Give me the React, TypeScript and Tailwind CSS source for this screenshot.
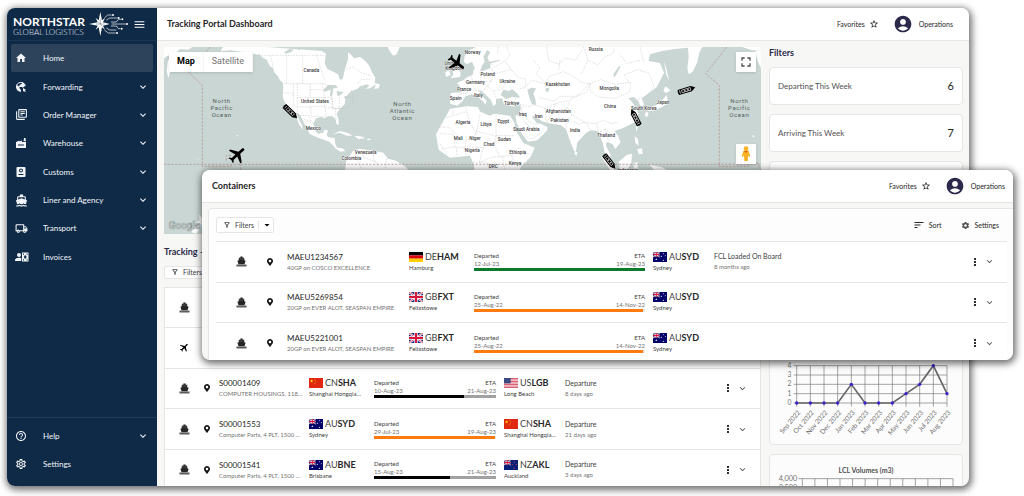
import { useState, type ReactNode } from "react";
import clsx from "clsx";
import {
  MdAccountCircle,
  MdArrowDropDown,
  MdDirectionsBoat,
  MdExpandMore,
  MdFactory,
  MdFlight,
  MdFullscreen,
  MdHelpOutline,
  MdHome,
  MdMenu,
  MdMoreVert,
  MdOutlineFilterAlt,
  MdOutlineLibraryBooks,
  MdOutlineLocalShipping,
  MdOutlineSettings,
  MdSettings,
  MdSort,
  MdStarOutline,
} from "react-icons/md";
import { FaMapMarkerAlt } from "react-icons/fa";

type Country = "DE" | "GB" | "AU" | "CN" | "US" | "NZ";

type Port = { country: Country; code: string; city: string };

type Shipment = {
  id: string;
  detail: string;
  from: Port;
  to: Port;
  departed: string;
  eta: string;
  progress: number;
  tone: "green" | "orange" | "black";
  status?: string;
  ago?: string;
};

const sydney: Port = { country: "AU", code: "SYD", city: "Sydney" };
const felixstowe: Port = { country: "GB", code: "FXT", city: "Felixstowe" };
const shanghai: Port = { country: "CN", code: "SHA", city: "Shanghai Hongqiao Int" };

const containers: Shipment[] = [
  {
    id: "MAEU1234567",
    detail: "40GP on COSCO EXCELLENCE",
    from: { country: "DE", code: "HAM", city: "Hamburg" },
    to: sydney,
    departed: "12-Jul-23",
    eta: "19-Aug-23",
    progress: 100,
    tone: "green",
    status: "FCL Loaded On Board",
    ago: "8 months ago",
  },
  {
    id: "MAEU5269854",
    detail: "20GP on EVER ALOT, SEASPAN EMPIRE",
    from: felixstowe,
    to: sydney,
    departed: "25-Aug-22",
    eta: "14-Nov-22",
    progress: 99,
    tone: "orange",
  },
  {
    id: "MAEU5221001",
    detail: "20GP on EVER ALOT, SEASPAN EMPIRE",
    from: felixstowe,
    to: sydney,
    departed: "25-Aug-22",
    eta: "14-Nov-22",
    progress: 99,
    tone: "orange",
  },
];

const shipments: Shipment[] = [
  {
    id: "S00001409",
    detail: "COMPUTER HOUSINGS, 118 PLT",
    from: shanghai,
    to: { country: "US", code: "LGB", city: "Long Beach" },
    departed: "10-Aug-23",
    eta: "21-Aug-23",
    progress: 74,
    tone: "black",
    status: "Departure",
    ago: "8 days ago",
  },
  {
    id: "S00001553",
    detail: "Computer Parts, 4 PLT, 1500 KGS",
    from: sydney,
    to: shanghai,
    departed: "29-Jul-23",
    eta: "19-Aug-23",
    progress: 99,
    tone: "orange",
    status: "Departure",
    ago: "21 days ago",
  },
  {
    id: "S00001541",
    detail: "Computer Parts, 4 PLT, 1500 KGS",
    from: { country: "AU", code: "BNE", city: "Brisbane" },
    to: { country: "NZ", code: "AKL", city: "Auckland" },
    departed: "15-Aug-23",
    eta: "21-Aug-23",
    progress: 62,
    tone: "black",
    status: "Departure",
    ago: "3 days ago",
  },
];

const toneClass = {
  green: "bg-[#0b7a2b]",
  orange: "bg-[#ff7a0f]",
  black: "bg-black",
};

/* ---------- icons ---------- */

function ForwardingIcon() {
  return (
    <svg viewBox="0 0 24 24" className="size-3" fill="none" stroke="currentColor" strokeWidth="2">
      <path d="M20.6 10A9 9 0 1 0 11 20.9" />
      <path
        d="M4 8l5.500 5.500v2l2.500 2.500v3C6 21 2 16 4 8zM14 3v2l-2.500 2H9.500v2.500h-2V12H14l1.500 1.500L20 10c0-3-2-6-6-7z"
        fill="currentColor"
        stroke="none"
      />
      <path d="M16 14l6.500 4-2.800.7 1.800 3-1.600 1-1.800-3-2.100 2z" fill="currentColor" stroke="none" />
    </svg>
  );
}

function CustomsIcon() {
  return (
    <svg viewBox="0 0 24 24" className="size-3" fill="currentColor">
      <path
        fillRule="evenodd"
        d="M5 2h14a2 2 0 0 1 2 2v16a2 2 0 0 1-2 2H5a2 2 0 0 1-2-2V4c0-1.100.9-2 2-2zm7 3a4 4 0 1 0 0 8 4 4 0 0 0 0-8zM7 16v2h10v-2z"
      />
      <circle cx="12" cy="9" r="2" />
    </svg>
  );
}

function InvoicesIcon() {
  return (
    <svg viewBox="0 0 28 24" className="h-3 w-[14px]" fill="currentColor">
      <circle cx="8" cy="8" r="4" />
      <path d="M0 20v-2c0-3 4-4.500 8-4.500 1.500 0 3 .2 4.500.6V20z" />
      <path
        fillRule="evenodd"
        d="M14 3h13v18H14zM16 5v3c1 0 2-1 2-3zm7 0c0 2 1 3 2 3V5zm-2.500 3.500a2.500 3.500 0 1 0 0 7 2.500 3.500 0 0 0 0-7zM16 16v3h2c0-2-1-3-2-3zm9 0c-1 0-2 1-2 3h2z"
      />
    </svg>
  );
}

function ShipIcon() {
  return (
    <svg viewBox="0 0 24 24" className="size-[11px] text-neutral-800" fill="currentColor">
      <path d="M9.500 1h5v3H18v5.500l3 1-2.500 7.500h-13L3 10.500l3-1V4h3.500z" />
      <path d="M1 18.500h22V23H1z" opacity=".75" />
      <path d="M7.500 6h9v1h-9z" fill="#fff" opacity=".4" />
    </svg>
  );
}

const starPoints = "M0-3.300 1-1 3.400-.9 1.500.6 2.100 3 0 1.600-2.100 3-1.500.6-3.400-.9-1-1z";

function Flag({ country }: { country: Country }) {
  const union = (w: number, h: number) => (
    <g>
      <rect width={w} height={h} fill="#1b2a78" />
      <path d={`M0 0 ${w} ${h}M${w} 0 0 ${h}`} stroke="#fff" strokeWidth={h / 5} />
      <path d={`M0 0 ${w} ${h}M${w} 0 0 ${h}`} stroke="#d8153a" strokeWidth={h / 14} />
      <path d={`M${w / 2} 0V${h}M0 ${h / 2}H${w}`} stroke="#fff" strokeWidth={h / 3} />
      <path d={`M${w / 2} 0V${h}M0 ${h / 2}H${w}`} stroke="#d8153a" strokeWidth={h / 5} />
    </g>
  );
  const star = (x: number, y: number, s: number, fill: string) => (
    <path d={starPoints} transform={`translate(${x} ${y}) scale(${s})`} fill={fill} />
  );

  return (
    <svg viewBox="0 0 42 30" className="h-[10px] w-[14px] shrink-0 overflow-hidden">
      {country === "DE" && (
        <>
          <rect width="42" height="10" fill="#000" />
          <rect y="10" width="42" height="10" fill="#dd0000" />
          <rect y="20" width="42" height="10" fill="#ffce00" />
        </>
      )}
      {country === "GB" && union(42, 30)}
      {country === "AU" && (
        <>
          <rect width="42" height="30" fill="#00006b" />
          {union(20, 15)}
          {star(10, 22, 1, "#fff")}
          {star(31, 5, 0.7, "#fff")}
          {star(25, 13, 0.7, "#fff")}
          {star(37, 11, 0.7, "#fff")}
          {star(31, 25, 0.7, "#fff")}
        </>
      )}
      {country === "NZ" && (
        <>
          <rect width="42" height="30" fill="#062078" />
          {union(20, 15)}
          {star(31, 6, 0.8, "#e0334d")}
          {star(25, 14, 0.8, "#e0334d")}
          {star(37, 13, 0.8, "#e0334d")}
          {star(31, 24, 0.8, "#e0334d")}
        </>
      )}
      {country === "CN" && (
        <>
          <rect width="42" height="30" fill="#e02810" />
          {star(8, 9, 1.5, "#ffde00")}
          {star(16, 4, 0.5, "#ffde00")}
          {star(19, 8, 0.5, "#ffde00")}
          {star(19, 13, 0.5, "#ffde00")}
          {star(16, 17, 0.5, "#ffde00")}
        </>
      )}
      {country === "US" && (
        <>
          <rect width="42" height="30" fill="#fff" />
          {[0, 1, 2, 3, 4, 5, 6].map((i) => (
            <rect key={i} y={i * 4.6} width="42" height="2.300" fill="#d03048" />
          ))}
          <rect width="20" height="16" fill="#3c4a80" />
        </>
      )}
    </svg>
  );
}

function NorthstarMark() {
  return (
    <svg viewBox="0 0 120 72" className="h-6 w-10" fill="none" stroke="#fff" strokeWidth="2">
      <path
        d="M34 0l5 25 9-7-6 13 20 5-20 5 6 12-9-7-5 26-5-26-9 7 6-12-26-5 26-5-6-13 9 7z"
        fill="#fff"
        stroke="none"
      />
      <path d="M34 22v14H48M34 36l-6-6M34 36l6 7M34 36H20" stroke="#0f2a47" strokeWidth="1" />
      <path d="M46 18l10-9h12M52 24l10-6h24M66 30h16l6-8h8M68 36h44M66 42h16l6 8h6M52 48l10 6h20M46 54l12 9h22" />
      <g fill="#fff" stroke="none">
        <circle cx="72" cy="9" r="3" />
        <circle cx="89" cy="18" r="3" />
        <circle cx="100" cy="22" r="3" />
        <circle cx="114" cy="36" r="3" />
        <circle cx="98" cy="50" r="3" />
        <circle cx="84" cy="63" r="3" />
      </g>
    </svg>
  );
}

/* ---------- sidebar ---------- */

const navItems: { label: string; icon: ReactNode; expandable?: boolean }[] = [
  { label: "Home", icon: <MdHome size={12} /> },
  { label: "Forwarding", icon: <ForwardingIcon />, expandable: true },
  { label: "Order Manager", icon: <MdOutlineLibraryBooks size={13} />, expandable: true },
  { label: "Warehouse", icon: <MdFactory size={12} />, expandable: true },
  { label: "Customs", icon: <CustomsIcon />, expandable: true },
  { label: "Liner and Agency", icon: <MdDirectionsBoat size={13} />, expandable: true },
  { label: "Transport", icon: <MdOutlineLocalShipping size={13} />, expandable: true },
  { label: "Invoices", icon: <InvoicesIcon /> },
];

function NavItem({
  label,
  icon,
  expandable,
  active,
}: {
  label: string;
  icon: ReactNode;
  expandable?: boolean;
  active?: boolean;
}) {
  return (
    <a
      href="#"
      className={clsx(
        "flex min-h-7 flex-1 items-center rounded-xs px-1 text-[8px] text-slate-100",
        active ? "bg-[#2d435c]" : "hover:bg-white/5",
      )}
    >
      <span className="flex w-7 items-center">{icon}</span>
      <span className="flex-1">{label}</span>
      {expandable ? <MdExpandMore size={12} /> : null}
    </a>
  );
}

function Sidebar() {
  return (
    <aside className="flex w-[150px] shrink-0 flex-col bg-[#0f2a47] text-white">
      <div className="flex h-[33px] shrink-0 items-center border-b border-[#1b3553] pl-[6px]">
        <div className="w-[76px] pt-1 whitespace-nowrap">
          <div className="text-[12px] leading-[12px] font-bold">NORTHSTAR</div>
          <div className="text-[8px] leading-[8px] font-light text-slate-200">GLOBAL LOGISTICS</div>
        </div>
        <NorthstarMark />
        <button type="button" aria-label="Toggle menu" className="ml-1">
          <MdMenu size={13} />
        </button>
      </div>
      <nav className="mx-1 mt-[3px] flex h-[227px] flex-col">
        {navItems.map((item) => (
          <NavItem key={item.label} {...item} active={item.label === "Home"} />
        ))}
      </nav>
      <nav className="mt-auto flex flex-col border-t border-[#243d5a] px-1 pt-1 pb-2">
        <NavItem label="Help" icon={<MdHelpOutline size={12} />} expandable />
        <NavItem label="Settings" icon={<MdOutlineSettings size={12} />} />
      </nav>
    </aside>
  );
}

/* ---------- shared pieces ---------- */

function TitleBar({ title, className }: { title: string; className?: string }) {
  return (
    <header
      className={clsx(
        "flex h-[33px] shrink-0 items-center border-b border-neutral-200 bg-white pl-[10px] text-[7px] text-neutral-800",
        className,
      )}
    >
      <h1 className="flex-1 text-[9px] font-bold">{title}</h1>
      <button type="button" className="mr-[14px] flex items-center gap-1">
        Favorites
        <MdStarOutline size={10} />
      </button>
      <button type="button" className="flex items-center gap-[6px]">
        <MdAccountCircle size={20} className="text-[#2b2a4a]" />
        Operations
      </button>
    </header>
  );
}

function FilterButton() {
  return (
    <button
      type="button"
      className="flex h-4 w-[58px] items-center rounded-xs border border-neutral-200 bg-white pl-[6px] text-[7px] text-neutral-700"
    >
      <MdOutlineFilterAlt size={8} />
      <span className="mx-1">Filters</span>
      <span className="flex h-2 items-center border-l border-neutral-200 pl-[2px]">
        <MdArrowDropDown size={12} className="text-black" />
      </span>
    </button>
  );
}

function PortCell({ port }: { port: Port }) {
  return (
    <div className="min-w-0">
      <div className="flex items-center gap-[2px] text-[9px] leading-[12px] text-neutral-700">
        <Flag country={port.country} />
        <span>
          {port.country}
          <b className="font-bold text-neutral-800">{port.code}</b>
        </span>
      </div>
      <div className="w-[54px] truncate text-[6px] leading-[10px] text-neutral-700">{port.city}</div>
    </div>
  );
}

function ShipmentRow({ item, columns }: { item: Shipment; columns: string }) {
  return (
    <li className={clsx("grid min-h-0 items-center border-t border-neutral-200 bg-white pr-3", columns)}>
      <span className="flex justify-center">
        <ShipIcon />
      </span>
      <FaMapMarkerAlt size={8} className="text-neutral-900" />
      <div className="min-w-0 pr-[6px]">
        <div className="text-[8px] leading-[12px] text-neutral-800">{item.id}</div>
        <div className="truncate text-[6px] leading-[10px] text-neutral-500">{item.detail}</div>
      </div>
      <PortCell port={item.from} />
      <div className="mr-2 text-[6px] leading-[8px] text-neutral-500">
        <div className="flex justify-between text-neutral-700">
          <span>Departed</span>
          <span>ETA</span>
        </div>
        <div className="flex justify-between">
          <span>{item.departed}</span>
          <span>{item.eta}</span>
        </div>
        <div className={clsx("h-[3px]", item.tone === "black" ? "bg-neutral-400" : "bg-neutral-200")}>
          <div className={clsx("h-full", toneClass[item.tone])} style={{ width: `${item.progress}%` }} />
        </div>
      </div>
      <PortCell port={item.to} />
      <div className="text-neutral-700">
        <div className="text-[7px] leading-[11px]">{item.status}</div>
        <div className="text-[6px] leading-[10px] text-neutral-500">{item.ago}</div>
      </div>
      <div className="flex items-center justify-end gap-[3px]">
        <button type="button" aria-label={`Actions for ${item.id}`}>
          <MdMoreVert size={12} className="text-black" />
        </button>
        <button type="button" aria-label={`Expand ${item.id}`}>
          <MdExpandMore size={11} className="text-neutral-600" />
        </button>
      </div>
    </li>
  );
}

/* ---------- map ---------- */

const americasLabels: [number, number, string][] = [
  [454, 214, "Canada"],
  [465, 309, "United States"],
  [460, 390, "Mexico"],
  [617, 460, "Venezuela"],
  [574, 480, "Colombia"],
];

const easternLabels: [number, number, string][] = [
  [98, 162, "Norway"],
  [34, 195, "United"],
  [44, 210, "Kingdom"],
  [143, 226, "Poland"],
  [106, 250, "Germany"],
  [202, 249, "Ukraine"],
  [73, 273, "France"],
  [115, 289, "Italy"],
  [47, 298, "Spain"],
  [467, 152, "Russia"],
  [353, 258, "Kazakhstan"],
  [508, 268, "Mongolia"],
  [215, 314, "Türkiye"],
  [510, 322, "China"],
  [611, 329, "South Korea"],
  [669, 312, "Japan"],
  [355, 339, "Afghanistan"],
  [248, 346, "Iraq"],
  [296, 352, "Iran"],
  [359, 366, "Pakistan"],
  [69, 370, "Algeria"],
  [138, 376, "Libya"],
  [190, 369, "Egypt"],
  [259, 392, "Saudi Arabia"],
  [405, 395, "India"],
  [498, 409, "Thailand"],
  [55, 418, "Mali"],
  [105, 418, "Niger"],
  [193, 422, "Sudan"],
  [147, 436, "Chad"],
  [97, 455, "Nigeria"],
  [233, 460, "Ethiopia"],
  [160, 502, "DRC"],
  [225, 494, "Kenya"],
  [563, 514, "Indonesia"],
];

const planePath =
  "M21 16v-2l-8-5V3.500c0-.83-.67-1.500-1.500-1.500S10 2.670 10 3.500V9l-8 5v2l8-2.500V19l-2 1.500V22l3.500-1 3.500 1v-1.500L13 19v-5.500l8 2.500z";

function PlaneMarker({ x, y, angle }: { x: number; y: number; angle: number }) {
  return (
    <path
      d={planePath}
      transform={`translate(${x} ${y}) rotate(${angle}) scale(2.700) translate(-11.500 -12)`}
      fill="#000"
    />
  );
}

function VesselMarker({ x, y, angle }: { x: number; y: number; angle: number }) {
  return (
    <g transform={`translate(${x} ${y}) rotate(${angle})`}>
      <path d="M-26-8h40l13 8-13 8h-40q-3-8 0-16z" fill="#000" />
      <path d="M-21-5v10" stroke="#fff" strokeWidth="2" />
      <g fill="none" stroke="#e5e5e5" strokeWidth="2">
        <path d="M-15-4h8v8h-8zM-5-4h8v8h-8zM5-4h7v8H5z" />
      </g>
    </g>
  );
}

function OceanLabel({ x, y, lines }: { x: number; y: number; lines: string[] }) {
  return (
    <text textAnchor="middle" className="fill-[#55605f] text-[18px] tracking-widest">
      {lines.map((line, i) => (
        <tspan key={line} x={x} y={y + i * 20}>
          {line}
        </tspan>
      ))}
    </text>
  );
}

function WorldMap() {
  const [view, setView] = useState("Map");

  return (
    <section
      aria-label="Shipment map"
      className="relative h-[187px] shrink-0 overflow-hidden bg-[#c9d6d3] font-['Roboto',sans-serif]"
    >
      <svg viewBox="0 0 1791 561" preserveAspectRatio="xMidYMid slice" className="size-full">
        {/* Americas */}
        <g transform="translate(-12 -140)">
          <g fill="#fff">
            <path d="M12 138H100L85 148 60 146 45 160 20 168 12 175zM24 178l12 2-2 22-9 32-5-22z" />
            <path d="M190 138h108l-2 26-14-4-30-4-40-6-30 2z" />
            <path d="M294 138l2 22 14 14 10 4 10 20 8 4 4 14 12 12 6 12 8 8 2 14-2 24 4 16 8 12 12 10 10 12 8 18 8 20 10 14-2-14-10-18-6-20 10 8 10 20 14 22 4 14 26 12 18 6 16 6 12 12 8 10 14 8 14-2-8-8-16-2-6-10-2-18-20-4-4-6 4-14-10-2-6 10-14 2-10-10-4-20 8-16 16-4 10 4 10-6 14 0 8 8 4 16 6 2 0-16-6-18 8-12 16-16 2-16-4-6 8-4 14-14 18-6 8-8 22-6 6 4-12 10 14-2 18-12-6 14 14-2 4-12-16-4 2-16-10-16-8-20-14-16-14-10-18 4-10-12-8-6 0 20-4 14-6 20-6 26-8 2-6-16-14-8-18-8-8-18 4-28-12-8z" />
            <path d="M682 138l8 16 10 12 10-4 10-24zM520 400l20-8 24 6 14 8-18 0-20-8zM582 406l20 2 14 5-20 4zM622 415l10 0v4h-10z" />
            <path d="M548 545l8-40 2-20 20-32 18-8 44 6 30 6 14 18 24 6 30 20 14 16-2 34zM230 403l5 3-4 3z" />
            <path d="M490 268l14-14 22 0 8 8-14 2-4 26-6-4 2-18-18 6zM530 272l22 4-14 10-6 0z" fill="#c9d6d3" />
            <path d="M372 156l16-10 14 2-10 8-14 4zM398 138h30l-10 12z" fill="#c9d6d3" />
          </g>
          <g fill="none" stroke="#c4c4c4" strokeWidth="1.500" strokeDasharray="5 3">
            <path d="M296 165h200M332 165l12 60M380 165v85M428 165v85M470 165l12 40 14 38M366 250h126l26 14M366 278h34v40l-16 14M400 250v38M412 250v42h38M412 292v60M450 250v42M450 268h36M450 292h44M486 250l8 42v30M450 318h46M412 345h34l8 18M412 320h40l2 28h40M496 322l4 38M494 292h22l4 30h-22M516 292v32h22M538 290v36l36-6M518 324h38M526 324l2 36M540 324l8 34M552 290h26v18M574 270l6 20M424 354l24 8 20 10 14 20M560 206l20-6 20 16 34 10M590 250l14-12 26-2" />
            <path d="M560 470l34 10 10 26M604 450l8 22 40 14M640 456v22l16 20M680 474l-4 32" />
          </g>
        </g>

        {/* Europe, Africa and Asia */}
        <g transform="translate(828 -140)">
          <g fill="#fff">
            <path d="M112 138l-24 12-14 16-2 18 8 8 16-8 6 14 8 18 10-2 6-18 8-12-4-14 12-22 8 8-8 16 6 12 24-4 14-2-22 8-12 2-2 16-22 8-16 2-4-16-8 14-2 12-16 6-12 10-20 8 12 12 4 16-34 2-2 32 22 6 16-14 8-14 20-6 14 4 20 18 6 10 4-12-16-18-8-14 12 4 24 24 8 20 8-8 0-14 18-2 6 18 24 6 26-4-2 26-14 6 4 22 16 34 18 22 28-4 30-30 0-10-20-10-12-2-14-18 6-4 26 18 34 8 20 2 16 12 10 30 14 36 6 0 4-26 26-28 16-8 18 2 10 20 6 14 6 30 16 16 2-8-14-28 2-12 18 8 8 14 16-20-8-20-10-14 24-8 36-18 12-26-12-24-12-16-8-6 18-4 14 14 6 16 10-6-6-20 18-14 26-20 14-26 8-16-12-30-34-6 4-20 36-10 38-6 40-4 2 30-4 32 4 18 12-8 14-28 6-30 8-14 22-12z" />
            <path d="M32 186l14-6 4 18 12 20-2 12-28 4 8-12zM16 216l12-6 4 14-14 6z" />
            <path d="M30 325l50-7 34 2 6 14 30 12 12-6 48 6 12 18 8 30 20 34 34 14-12 28-30 30-8 40H106l-4-46-12-28-60 6-34-24-8-46 22-40z" />
            <path d="M672 182l8 26 8 34-10-20zM676 258l16 12-14 8-8-6zM680 284l4 24-18 12-20 10-22 2 4-10 22-8 18-16zM618 334l8 4-4 12-8-4zM588 376l6 4-6 14zM584 408l10 8 2 20-10-8zM592 446l14-2 2 16-12 2zM404 452l8 4-2 10-6-4zM536 484l24-20 16-4-2 28-14 24h-20zM482 466l28 20 24 36-12 4zM580 488l14-2-2 24-10 2zM630 494l34 6 44 24h-54zM946 150h20v60l-14-30zM900 138h66v10l-30 2z" />
            <path d="M936 404l8 4-4 4z" />
          </g>
          <g fill="#c9d6d3">
            <path d="M182 284l8-16 18 4 8-6 18 16 6 10-24-2-18 6zM262 268l12-6 14 2-8 16 6 16 2 18-12-2-8-20zM318 262l10 2-4 12-8-4zM520 222l18-26 4 2-14 26-6 8zM238 345l40 44-8-6z" />
          </g>
          <g fill="none" stroke="#c4c4c4" strokeWidth="1.500" strokeDasharray="5 3">
            <path d="M70 236l12 22 0 20-24 4M92 228l10 20 24-4 16 14-12 12-30 0M120 214l4 30M150 200l12 20-8 22-30 2M162 220l50-12 24 24 22 4-4 26-20 4M154 242l-12 16 18 14 28-6 6-18M160 272l10 22M150 186l14 14 30-18M200 140l10 24-16 18 20 26M176 140l-4 22" />
            <path d="M256 260l20-20 40 10 12-22 42-14 24 10 30 22 24 4-24 26-16 12-46 0-20 14-44-10M280 180l20 20-12 20 24 22M320 140l6 40 30 12 20-18 30 6 20-30M360 180l-4 30M430 140l14 40 30 14 20-24 24-10 6-22M444 180l-20 40M448 250l34-12 40 14 50-6-4 30-42 18-50-4-24-16z" />
            <path d="M452 252l-14 24-46 20-10 26 14 22 38 22 30 4 26-10 24 10 20-4M568 248l-16-24 40-16 34 10 16 40-24 30-28 10M540 160l20 30 40-10M600 140l10 44M240 312l26 6 20-4 30 10 30-14 40-10M316 324l2 44M346 310l-10 32-16 26M382 322l-26 20-8 32M240 320l26 44 30 10M236 350l-6-20 22-10M246 404l30 12 30-20M396 344l-20 30 6 12M434 366l-20 6-18-10M440 368l12 24M470 370l6 26 20-10 18 16M496 386l10 40M476 396l-4 10" />
            <path d="M18 352l60-18M40 320l-2 26M78 320l6 30 24 52-34 22-50-44-24 0M108 402l12-60M108 392l60 16V346M168 406h56M168 408l-4 24 14 36 40-2 20-24M0 400l40 2 4 38-40 6M44 440l30 2 4-18M74 442l4 24M80 440l50 2 20-30M130 442l-12 44M118 486l40-16 30 0M188 470l6 40M218 466l2 20 30 14M238 442l14 20 24-2M100 486h40l10 24M0 430l20 30M50 442v24" />
          </g>
        </g>

        {/* date line and equator */}
        <g fill="none" stroke="#b99a9a" strokeWidth="2.500" strokeDasharray="7 4">
          <path d="M138 0L73 75l42 40v243h86v-6M0 352h1791M201 325h-14v20M228 350l5 40 60 171" />
          <path d="M1688 0l-63 80 41 35v243h87v-6M1778 345l13 26" />
        </g>

        <g
          textAnchor="middle"
          className="fill-neutral-700 text-[14px] font-medium"
          stroke="#fff"
          strokeWidth="2"
          paintOrder="stroke"
        >
          {americasLabels.map(([x, y, name]) => (
            <text key={name} x={x - 12} y={y - 140}>
              {name}
            </text>
          ))}
          {easternLabels.map(([x, y, name]) => (
            <text key={name} x={x + 828} y={y - 140}>
              {name}
            </text>
          ))}
        </g>
        <OceanLabel x={173} y={169} lines={["North", "Pacific", "Ocean"]} />
        <OceanLabel x={715} y={178} lines={["North", "Atlantic", "Ocean"]} />
        <OceanLabel x={1726} y={169} lines={["North", "Pacific", "Ocean"]} />

        <PlaneMarker x={220} y={323} angle={48} />
        <PlaneMarker x={878} y={47} angle={128} />
        <VesselMarker x={380} y={195} angle={44} />
        <VesselMarker x={1568} y={129} angle={-17} />
        <VesselMarker x={1414} y={211} angle={-117} />
        <VesselMarker x={1337} y={344} angle={52} />

        <path d="M84 555l14-28 10-8-2-14 12 14-8 20-14 20zM150 385l8 8M102 334l3 4" fill="#fff" stroke="#fff" strokeWidth="2" />
        <text x="14" y="546" className="fill-white text-[30px] font-medium" stroke="#8b9694" strokeWidth="2">
          Google
        </text>
      </svg>

      <div className="absolute top-[5px] left-[5px] flex h-5 bg-white text-[9px] shadow-sm">
        {["Map", "Satellite"].map((name) => (
          <button
            key={name}
            type="button"
            onClick={() => setView(name)}
            className={clsx(
              "border-r border-neutral-100 px-2",
              view === name ? "font-bold text-black" : "text-neutral-500",
            )}
          >
            {name}
          </button>
        ))}
      </div>
      <button
        type="button"
        aria-label="Full screen"
        className="absolute top-[5px] right-[5px] flex size-5 items-center justify-center bg-white shadow-sm"
      >
        <MdFullscreen size={16} className="text-neutral-600" />
      </button>
      <button
        type="button"
        aria-label="Street view"
        className="absolute top-[97px] right-[5px] flex size-5 items-center justify-center bg-white shadow-sm"
      >
        <svg viewBox="0 0 30 48" className="h-4 w-[10px]">
          <circle cx="15" cy="8" r="7" fill="#f9b021" />
          <path d="M7 15h16l5 16-4 2-3-5-1 17H10L9 28l-3 5-4-2z" fill="#f9b021" />
          <path d="M8 15h14l-7 5zM15 30v15" fill="#d9601a" stroke="#e08a12" />
        </svg>
      </button>
    </section>
  );
}

/* ---------- charts ---------- */

const months = [
  "Sep 2022",
  "Oct 2022",
  "Nov 2022",
  "Dec 2022",
  "Jan 2023",
  "Feb 2023",
  "Mar 2023",
  "Apr 2023",
  "May 2023",
  "Jun 2023",
  "Jul 2023",
  "Aug 2023",
];
const values = [0, 0, 0, 0, 2, 0, 0, 0, 1, 2, 4, 1];

// Drawn at three units to the pixel
function VolumeChart() {
  const px = (i: number) => 80 + i * 41;
  const py = (v: number) => 129 - v * 28;

  return (
    <svg viewBox="0 0 576 252" className="w-full">
      <g stroke="#777" strokeWidth="2">
        {[0, 1, 2, 3, 4].map((v) => (
          <path key={v} d={`M71 ${py(v)}H531`} />
        ))}
        {months.map((month, i) => (
          <path key={month} d={`M${px(i)} 17V140`} />
        ))}
      </g>
      <g className="fill-neutral-500 text-[20px]">
        {[0, 1, 2, 3, 4].map((v) => (
          <text key={v} x="64" y={py(v) + 6} textAnchor="end">
            {v}
          </text>
        ))}
        {months.map((month, i) => (
          <text key={month} textAnchor="end" transform={`translate(${px(i) + 12} 158) rotate(-50)`}>
            {month}
          </text>
        ))}
      </g>
      <polyline
        points={values.map((v, i) => `${px(i)},${py(v)}`).join(" ")}
        fill="none"
        stroke="#666"
        strokeWidth="5"
      />
      {values.map((v, i) => (
        <circle key={months[i]} cx={px(i)} cy={py(v)} r="5" fill="#3a22c8" />
      ))}
    </svg>
  );
}

function LclChart() {
  return (
    <svg viewBox="0 0 576 90" className="w-full">
      <g stroke="#777" strokeWidth="2">
        <path d="M86 14H549M86 40H549" />
        {[0, 1, 2, 3, 4, 5, 6, 7, 8, 9, 10, 11, 12].map((i) => (
          <path key={i} d={`M${97 + (i * 452) / 12} 14V90`} />
        ))}
      </g>
      <g textAnchor="end" className="fill-neutral-500 text-[22px]">
        <text x="82" y="21">
          4,000
        </text>
        <text x="82" y="47">
          3,500
        </text>
      </g>
    </svg>
  );
}

function FilterCard({ label, count }: { label?: string; count?: number }) {
  return (
    <button
      type="button"
      aria-label={label ?? "Filter"}
      className="flex h-[38px] shrink-0 items-center justify-between rounded-sm border border-neutral-200 bg-white px-2 text-left text-[8px] text-neutral-600"
    >
      <span>{label}</span>
      <span className="text-[11px] text-neutral-800">{count}</span>
    </button>
  );
}

/* ---------- windows ---------- */

const dashboardColumns = "grid-cols-[38px_16px_90px_65px_130px_61px_1fr_auto]";
const containerColumns = "grid-cols-[50px_21px_122px_65px_179px_61px_1fr_auto]";

function DashboardWindow() {
  return (
    <div className="flex h-[calc(100vh-18px)] overflow-hidden rounded-lg bg-[#f7f7f6] shadow-[1px_2px_7px_2px_rgba(0,0,0,0.55)]">
      <Sidebar />
      <div className="flex min-w-0 flex-1 flex-col">
        <TitleBar title="Tracking Portal Dashboard" className="pr-4" />
        <div className="flex min-h-0 flex-1 gap-2 pt-[6px] pr-[6px] pl-[7px]">
          <main className="flex min-w-0 flex-1 flex-col">
            <WorldMap />
            <h2 className="mt-3 mb-2 text-[9px] leading-[12px] font-bold text-[#2b2a4a]">Tracking – Shipments</h2>
            <FilterButton />
            <ul className="mt-2 grid h-[203px] shrink-0 grid-rows-5 border-x border-neutral-200 bg-white">
              <li className="flex items-center border-t border-neutral-200 pl-[14px]">
                <ShipIcon />
              </li>
              <li className="flex items-center border-t border-neutral-200 pl-[14px]">
                <MdFlight size={11} className="rotate-45 text-black" />
              </li>
              {shipments.map((item) => (
                <ShipmentRow key={item.id} item={item} columns={dashboardColumns} />
              ))}
            </ul>
          </main>
          <aside className="flex w-[194px] shrink-0 flex-col">
            <h2 className="mb-2 text-[9px] leading-[12px] font-bold text-[#2b2a4a]">Filters</h2>
            <div className="flex flex-col gap-[9px]">
              <FilterCard label="Departing This Week" count={6} />
              <FilterCard label="Arriving This Week" count={7} />
              <FilterCard />
              <section className="flex h-[237px] flex-col justify-end rounded-sm border border-neutral-200 bg-[#fcfcfc]">
                <VolumeChart />
              </section>
              <section className="rounded-sm border border-neutral-200 bg-[#fcfcfc] pt-[11px]">
                <h3 className="text-center text-[7px] leading-[8px] font-bold text-neutral-600">LCL Volumes (m3)</h3>
                <LclChart />
              </section>
            </div>
          </aside>
        </div>
      </div>
    </div>
  );
}

function ContainersWindow() {
  return (
    <section className="absolute top-[170px] right-[11px] left-[202px] flex h-[190px] flex-col overflow-hidden rounded-lg bg-[#f7f7f6] shadow-[1px_2px_7px_2px_rgba(0,0,0,0.55)]">
      <TitleBar title="Containers" className="pr-2" />
      <div className="mt-[5px] ml-[6px] rounded-tl-sm border-t border-l border-neutral-200 bg-[#fdfdfd] pr-[6px] pl-[7px]">
        <div className="flex h-8 items-center gap-5 pr-2 text-[7px] text-neutral-800">
          <FilterButton />
          <button type="button" className="ml-auto flex items-center gap-1">
            <MdSort size={12} />
            Sort
          </button>
          <button type="button" className="flex items-center gap-1">
            <MdSettings size={9} className="text-neutral-600" />
            Settings
          </button>
        </div>
        <ul className="grid h-[122px] grid-rows-3">
          {containers.map((item) => (
            <ShipmentRow key={item.id} item={item} columns={containerColumns} />
          ))}
        </ul>
      </div>
    </section>
  );
}

export default function App() {
  return (
    <div className="relative h-screen overflow-hidden bg-white pt-2 pr-[55px] pl-[7px] font-['Lato',sans-serif]">
      <DashboardWindow />
      <ContainersWindow />
    </div>
  );
}
